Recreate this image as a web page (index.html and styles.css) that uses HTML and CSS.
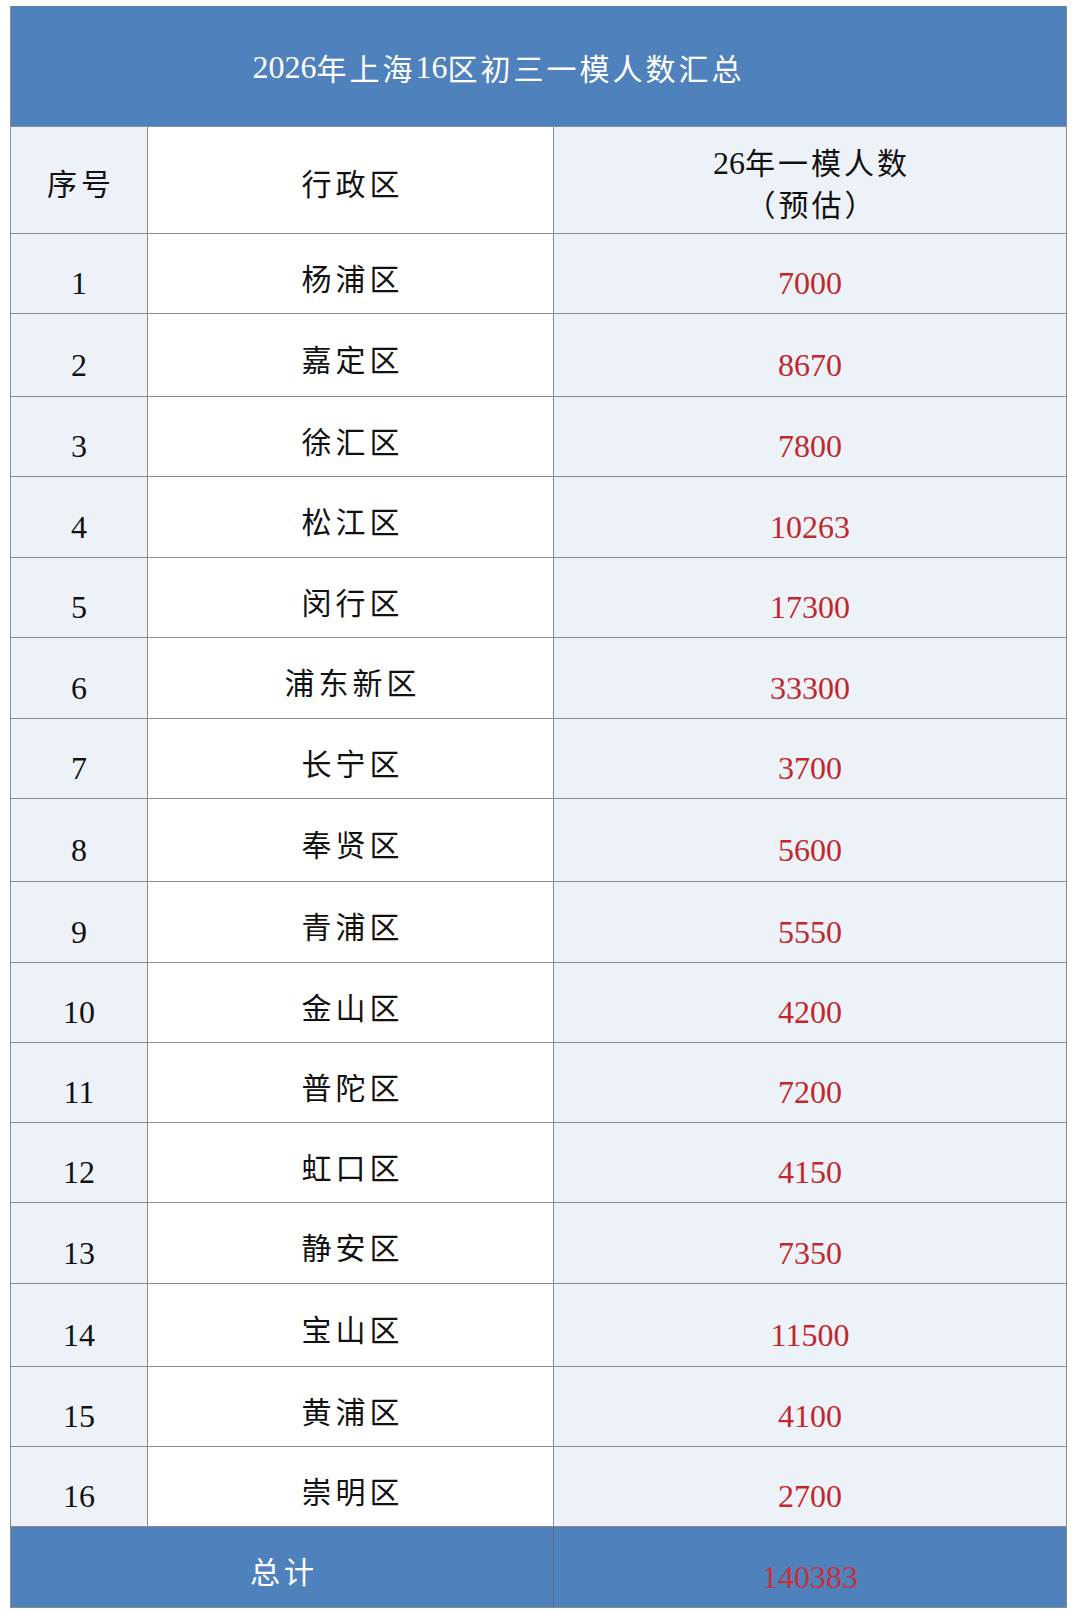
FILE: index.html
```html
<!DOCTYPE html>
<html lang="zh-CN">
<head>
<meta charset="utf-8">
<title>2026年上海16区初三一模人数汇总</title>
<link rel="stylesheet" href="styles.css">
</head>
<body>
<div class="table">
  <div class="cell title"><span class="d">2026</span>年上海<span class="d">16</span>区初三一模人数汇总</div>

  <div class="cell head shade">序号</div>
  <div class="cell head">行政区</div>
  <div class="cell head shade head-multi"><div class="hl"><span class="d">26</span>年一模人数</div><div class="hl">（预估）</div></div>

  <div class="cell num shade">1</div><div class="cell cjk">杨浦区</div><div class="cell num shade red">7000</div>
  <div class="cell num shade">2</div><div class="cell cjk">嘉定区</div><div class="cell num shade red">8670</div>
  <div class="cell num shade">3</div><div class="cell cjk">徐汇区</div><div class="cell num shade red">7800</div>
  <div class="cell num shade">4</div><div class="cell cjk">松江区</div><div class="cell num shade red">10263</div>
  <div class="cell num shade">5</div><div class="cell cjk">闵行区</div><div class="cell num shade red">17300</div>
  <div class="cell num shade">6</div><div class="cell cjk">浦东新区</div><div class="cell num shade red">33300</div>
  <div class="cell num shade">7</div><div class="cell cjk">长宁区</div><div class="cell num shade red">3700</div>
  <div class="cell num shade">8</div><div class="cell cjk">奉贤区</div><div class="cell num shade red">5600</div>
  <div class="cell num shade">9</div><div class="cell cjk">青浦区</div><div class="cell num shade red">5550</div>
  <div class="cell num shade">10</div><div class="cell cjk">金山区</div><div class="cell num shade red">4200</div>
  <div class="cell num shade">11</div><div class="cell cjk">普陀区</div><div class="cell num shade red">7200</div>
  <div class="cell num shade">12</div><div class="cell cjk">虹口区</div><div class="cell num shade red">4150</div>
  <div class="cell num shade">13</div><div class="cell cjk">静安区</div><div class="cell num shade red">7350</div>
  <div class="cell num shade">14</div><div class="cell cjk">宝山区</div><div class="cell num shade red">11500</div>
  <div class="cell num shade">15</div><div class="cell cjk">黄浦区</div><div class="cell num shade red">4100</div>
  <div class="cell num shade">16</div><div class="cell cjk">崇明区</div><div class="cell num shade red">2700</div>

  <div class="cell cjk total-label">总计</div>
  <div class="cell num total-value">140383</div>
</div>
</body>
</html>
```

FILE: styles.css
```css
html, body {
  margin: 0;
  padding: 0;
  background: #ffffff;
}

.table {
  margin: 6px 0 0 10px;
  width: 1056px;
  display: grid;
  grid-template-columns: 137px 406px 513px;
  grid-template-rows: 121px 107px 80px 83px 80px 81px 80px 81px 80px 83px 81px 80px 80px 80px 81px 83px 80px 80px 81px;
  border-left: 1px solid #8c8c8c;
  box-sizing: border-box;
  color: #111111;
}

.cell {
  box-sizing: border-box;
  border-right: 1px solid #8c8c8c;
  border-bottom: 1px solid #8c8c8c;
  display: flex;
  align-items: center;
  justify-content: center;
  background: #ffffff;
  font-family: "Liberation Serif", "Noto Sans CJK SC", serif;
}

.shade {
  background: #edf2f8;
}

.title {
  grid-column: 1 / 4;
  background: #4f81bd;
  color: #ffffff;
  font-family: "Liberation Serif", "Noto Sans CJK SC", serif;
  font-size: 30px;
  letter-spacing: 3px;
  padding: 2px 80px 0 0;
  border-bottom-color: #7f8ea3;
}

.d {
  font-family: "Liberation Serif", serif;
  font-size: 32px;
  letter-spacing: 0;
}

.head {
  font-family: "Noto Sans CJK SC", sans-serif;
  font-size: 30px;
  letter-spacing: 4px;
  padding: 3px 0 0 4px;
}

.head-multi {
  flex-direction: column;
  font-family: "Liberation Serif", "Noto Sans CJK SC", serif;
  letter-spacing: 3px;
  padding: 10px 0 0 3px;
}

.hl {
  line-height: 42px;
  height: 43.5px;
}

.num {
  font-family: "Liberation Serif", serif;
  font-size: 32px;
  padding-top: 20px;
}

.cjk {
  font-family: "Noto Sans CJK SC", sans-serif;
  font-size: 30px;
  letter-spacing: 4px;
  padding: 6px 0 0 4px;
}

.red {
  color: #c3262c;
}

.total-label {
  grid-column: 1 / 3;
  background: #4f81bd;
  color: #ffffff;
  border-right-color: #5a6b80;
}

.total-value {
  background: #4f81bd;
  color: #c9303a;
}
```
